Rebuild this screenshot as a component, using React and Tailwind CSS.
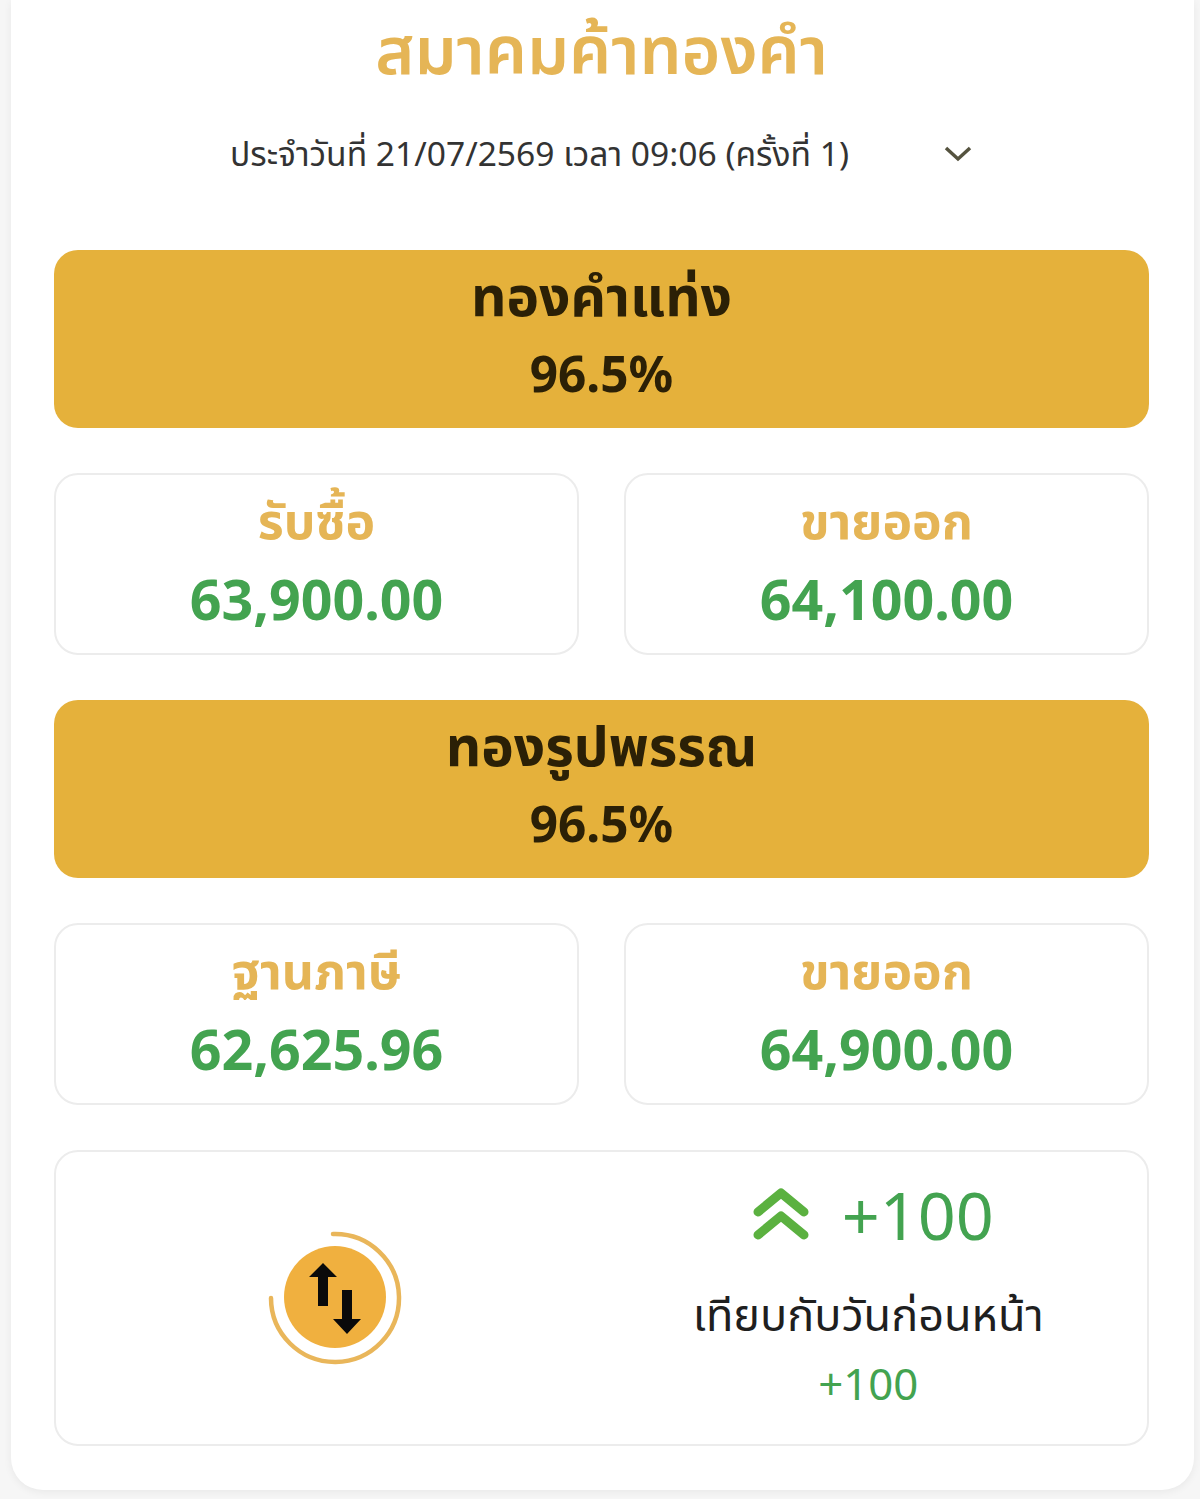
const font = { fontFamily: '"Noto Sans", "Noto Sans Thai", sans-serif' };

function Banner({ title }) {
  return (
    <div className="h-[178px] rounded-[24px] bg-[#e5b13b] flex flex-col items-center pt-[17px] text-[#2b2006] font-bold">
      <div className="text-[55px] leading-[56px]">{title}</div>
      <div className="text-[49.5px] leading-[62px] mt-[19px]">96.5%</div>
    </div>
  );
}

function PriceCard({ label, value }) {
  return (
    <div className="h-[182px] rounded-[24px] border-2 border-[#ececec] bg-white flex flex-col items-center pt-[16px] font-bold">
      <div className="text-[#e5b556] text-[50px] leading-[58px]">{label}</div>
      <div className="text-[#43a350] text-[55.5px] leading-[70px] mt-[15px]">{value}</div>
    </div>
  );
}

export default function App() {
  return (
    <div className="min-h-[1499px] bg-[#f6f6f6] pl-[11px] pr-[6px]" style={font}>
      <div className="h-[1490px] bg-white rounded-b-[32px] pl-[43px] pr-[45px] shadow-[0_2px_8px_rgba(0,0,0,0.06)]">
        <h1 className="pt-[10px] text-center text-[#e5b556] text-[66.5px] leading-[76px] font-semibold">สมาคมค้าทองคำ</h1>
        <div className="relative mt-[44px] h-[46px] flex items-center justify-center text-[#333333] text-[33.6px]">
          <span className="mr-[124px]">ประจำวันที่ 21/07/2569 เวลา 09:06 (ครั้งที่ 1)</span>
          <svg className="absolute left-[888px] top-[15px]" width="32" height="20" viewBox="0 0 32 20" fill="none" stroke="#55533f" strokeWidth="3.5">
            <path d="M4 3 L16 14 L28 3" />
          </svg>
        </div>

        <div className="mt-[74px] flex flex-col">
          <Banner title="ทองคำแท่ง" />
          <div className="grid grid-cols-2 gap-[45px] mt-[45px]">
            <PriceCard label="รับซื้อ" value="63,900.00" />
            <PriceCard label="ขายออก" value="64,100.00" />
          </div>
          <div className="mt-[45px]">
            <Banner title="ทองรูปพรรณ" />
          </div>
          <div className="grid grid-cols-2 gap-[45px] mt-[45px]">
            <PriceCard label="ฐานภาษี" value="62,625.96" />
            <PriceCard label="ขายออก" value="64,900.00" />
          </div>

          <div className="mt-[45px] h-[296px] rounded-[24px] border-2 border-[#ececec] bg-white grid grid-cols-2">
            <div className="flex items-center justify-center pl-[12px]">
              <svg width="134" height="134" viewBox="0 0 134 134">
                <circle cx="67" cy="66" r="51" fill="#f0b03f" />
                <path d="M65 3 A64 64 0 1 1 3 67" fill="none" stroke="#e9b65a" strokeWidth="4.5" strokeLinecap="round" />
                <path d="M55 32 L69 46 L60 46 L60 75 L50 75 L50 46 L41 46 Z" fill="#0a0a0a" />
                <path d="M79 103 L65 88 L74 88 L74 59 L84 59 L84 88 L93 88 Z" fill="#0a0a0a" />
              </svg>
            </div>
            <div className="flex flex-col items-center pr-[12px] pt-[24px]">
              <div className="flex items-center text-[#43a350] text-[66.5px] leading-[76px] ml-[9px]">
                <svg className="mr-[32px]" width="58" height="54" viewBox="0 0 58 54" fill="none" stroke="#5bb140" strokeWidth="9" strokeLinecap="round" strokeLinejoin="round">
                  <path d="M6 25 L29 6 L52 25" />
                  <path d="M6 48 L29 29 L52 48" />
                </svg>
                <span>+100</span>
              </div>
              <div className="text-[#1f1f1f] text-[45px] leading-[60px] mt-[32px]">เทียบกับวันก่อนหน้า</div>
              <div className="text-[#43a350] text-[43.8px] leading-[58px] mt-[10px]">+100</div>
            </div>
          </div>
        </div>
      </div>
    </div>
  );
}
